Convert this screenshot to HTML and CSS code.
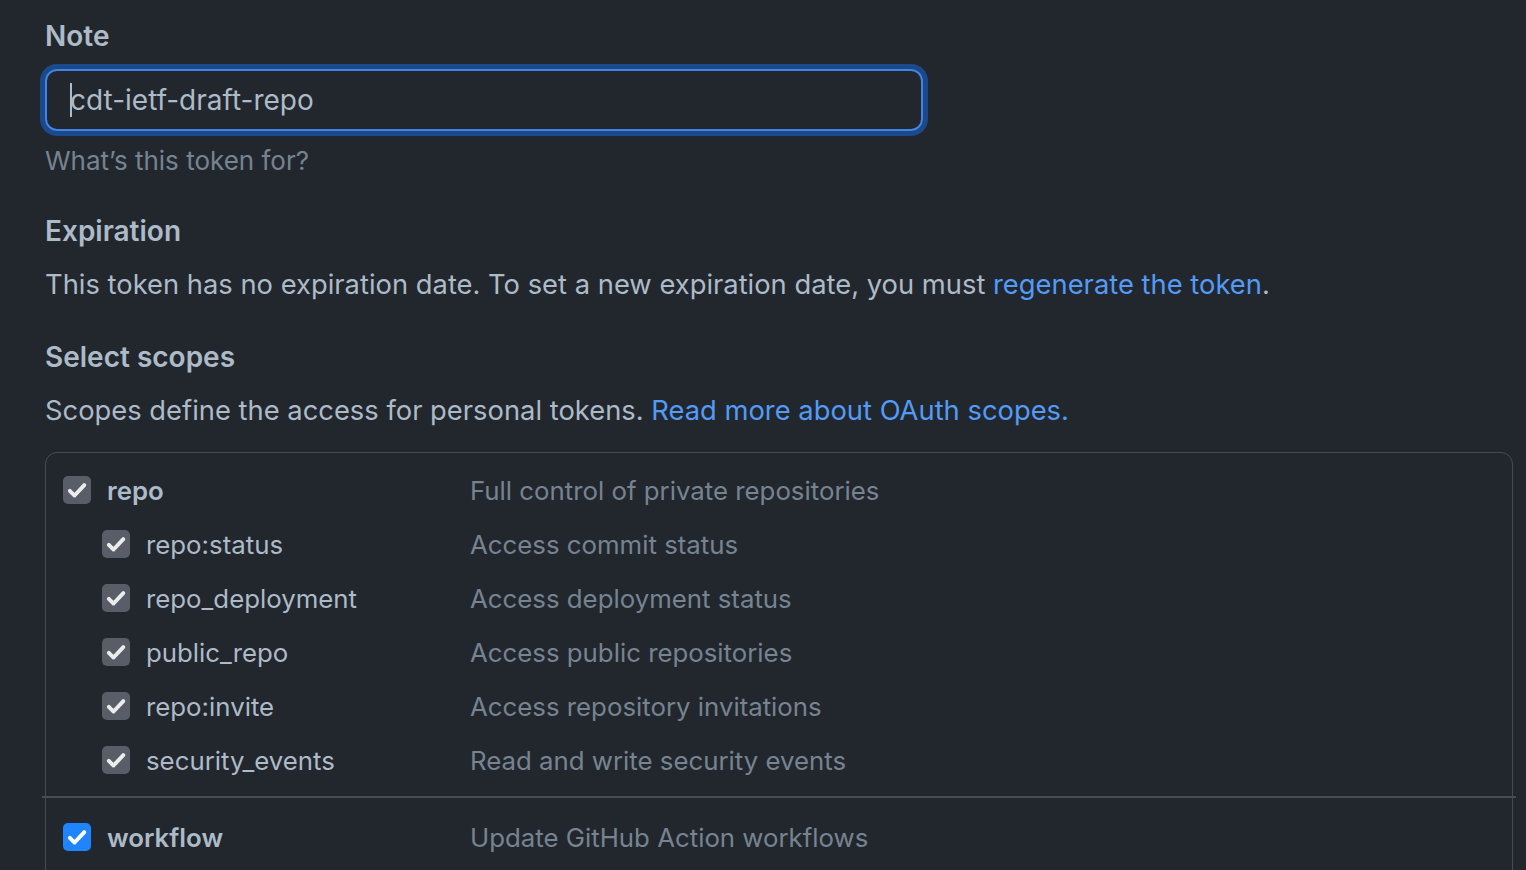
FILE: index.html
```html
<!DOCTYPE html>
<html lang="en">
<head>
<meta charset="utf-8">
<title>Token</title>
<link rel="stylesheet" href="styles.css">
</head>
<body>
<main class="page">
  <div class="field">
    <label class="label">Note</label>
    <div class="input"><span class="caret"></span>cdt-ietf-draft-repo</div>
    <p class="hint">What’s this token for?</p>
  </div>

  <h3 class="label section">Expiration</h3>
  <p class="text">This token has no expiration date. To set a new expiration date, you must <a class="link">regenerate the token</a>.</p>

  <h3 class="label section">Select scopes</h3>
  <p class="text">Scopes define the access for personal tokens. <a class="link">Read more about OAuth scopes.</a></p>

  <div class="scopes">
    <ul class="group">
      <li class="row top">
        <div class="name"><span class="cb grey"><svg viewBox="0 0 16 16"><path d="M3.6 8.5l2.9 2.9 6-6.4"/></svg></span><b>repo</b></div>
        <div class="desc">Full control of private repositories</div>
      </li>
      <li class="row sub">
        <div class="name"><span class="cb grey"><svg viewBox="0 0 16 16"><path d="M3.6 8.5l2.9 2.9 6-6.4"/></svg></span>repo:status</div>
        <div class="desc">Access commit status</div>
      </li>
      <li class="row sub">
        <div class="name"><span class="cb grey"><svg viewBox="0 0 16 16"><path d="M3.6 8.5l2.9 2.9 6-6.4"/></svg></span>repo_deployment</div>
        <div class="desc">Access deployment status</div>
      </li>
      <li class="row sub">
        <div class="name"><span class="cb grey"><svg viewBox="0 0 16 16"><path d="M3.6 8.5l2.9 2.9 6-6.4"/></svg></span>public_repo</div>
        <div class="desc">Access public repositories</div>
      </li>
      <li class="row sub">
        <div class="name"><span class="cb grey"><svg viewBox="0 0 16 16"><path d="M3.6 8.5l2.9 2.9 6-6.4"/></svg></span>repo:invite</div>
        <div class="desc">Access repository invitations</div>
      </li>
      <li class="row sub">
        <div class="name"><span class="cb grey"><svg viewBox="0 0 16 16"><path d="M3.6 8.5l2.9 2.9 6-6.4"/></svg></span>security_events</div>
        <div class="desc">Read and write security events</div>
      </li>
    </ul>
    <ul class="group divided">
      <li class="row top">
        <div class="name"><span class="cb blue"><svg viewBox="0 0 16 16"><path d="M3.6 8.5l2.9 2.9 6-6.4"/></svg></span><b>workflow</b></div>
        <div class="desc">Update GitHub Action workflows</div>
      </li>
    </ul>
  </div>
</main>
</body>
</html>
```

FILE: styles.css
```css
* { box-sizing: border-box; }
html, body { margin: 0; padding: 0; }
body {
  background: #22272e;
  color: #adbac7;
  font-family: Inter, "Noto Sans", "Liberation Sans", sans-serif;
  font-size: 28px;
  overflow: hidden;
  height: 870px;
}
.page {
  padding: 16px 13px 0 45px;
}
.label {
  display: block;
  margin: 0;
  font-size: 28px;
  font-weight: 600;
  line-height: 40px;
}
.input {
  margin-top: 13px;
  width: 878px;
  height: 62px;
  border: 2px solid #4184e4;
  border-radius: 12px;
  box-shadow: 0 0 0 5px #1b4a8c;
  padding-left: 23px;
  display: flex;
  align-items: center;
  font-size: 28px;
  color: #adbac7;
}
.caret {
  width: 2px;
  height: 34px;
  background: #adbac7;
  margin-right: -2px;
}
.hint {
  margin: 13px 0 0;
  font-size: 26px;
  line-height: 34px;
  color: #768390;
}
.section { margin-top: 33px; }
.text {
  margin: 14px 0 0;
  font-size: 27.35px;
  line-height: 40px;
}
.text + .section { margin-top: 32px; }
.link { color: #539bf5; text-decoration: none; }
.scopes {
  margin-top: 21px;
  border: 1px solid #444c56;
  border-radius: 12px;
  height: 480px;
  font-size: 25.8px;
}
.group {
  list-style: none;
  margin: 0;
  padding: 10px 0 9px;
}
.group.divided {
  margin: 0 -4px;
  padding: 12px 4px 0;
  border-top: 2px solid #444c56;
}
.row {
  display: flex;
  align-items: center;
  height: 54px;
}
.name {
  display: flex;
  align-items: center;
  width: 424px;
  padding-left: 17px;
  flex: none;
}
.sub .name { padding-left: 56px; }
.name b { font-weight: 600; }
.cb {
  width: 28px;
  height: 28px;
  border-radius: 5px;
  margin-right: 16px;
  display: flex;
  align-items: center;
  justify-content: center;
  flex: none;
}
.cb svg {
  width: 26px;
  height: 26px;
  fill: none;
  stroke: #ececec;
  stroke-width: 2.4;
  stroke-linecap: round;
  stroke-linejoin: round;
}
.cb.grey { background: #585d68; }
.cb.blue { background: #1f85ff; }
.cb.blue svg { stroke: #fff; }
.desc { color: #768390; }
```
